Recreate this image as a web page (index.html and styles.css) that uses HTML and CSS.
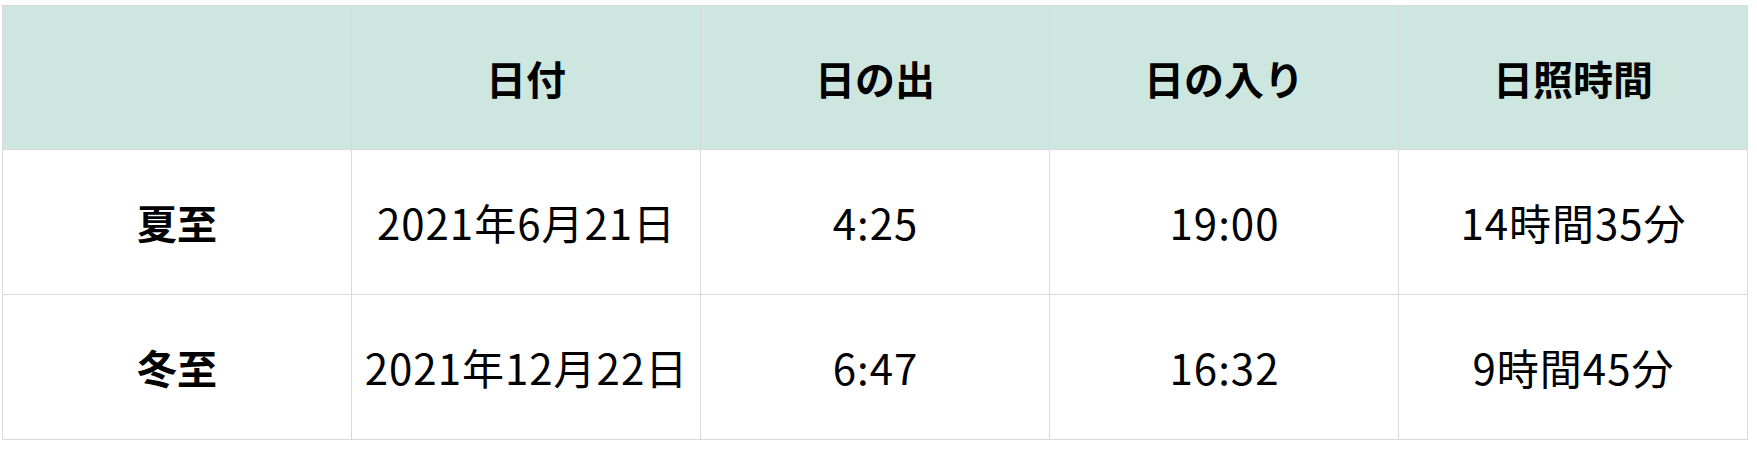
FILE: index.html
```html
<!DOCTYPE html>
<html lang="ja">
<head>
<meta charset="utf-8">
<link rel="stylesheet" href="styles.css">
</head>
<body>
<table class="sun-table">
  <thead>
    <tr>
      <th class="corner"></th>
      <th>日付</th>
      <th>日の出</th>
      <th>日の入り</th>
      <th>日照時間</th>
    </tr>
  </thead>
  <tbody>
    <tr>
      <th class="row-head">夏至</th>
      <td>2021年6月21日</td>
      <td>4:25</td>
      <td>19:00</td>
      <td>14時間35分</td>
    </tr>
    <tr>
      <th class="row-head">冬至</th>
      <td>2021年12月22日</td>
      <td>6:47</td>
      <td>16:32</td>
      <td>9時間45分</td>
    </tr>
  </tbody>
</table>
</body>
</html>
```

FILE: styles.css
```css
html, body {
  margin: 0;
  padding: 0;
  background: #ffffff;
}

body {
  padding: 5px 0 0 2px;
  font-family: "Noto Sans CJK JP", "Noto Sans", sans-serif;
  color: #000000;
}

.sun-table {
  border-collapse: collapse;
  table-layout: fixed;
  width: 1746px;
}

.sun-table th,
.sun-table td {
  border: 1px solid #d9d9d9;
  text-align: center;
  vertical-align: middle;
  padding: 0;
  font-size: 40px;
  line-height: 1;
}

.sun-table thead th {
  background: #cde6df;
  height: 143px;
  font-weight: 700;
}

.sun-table tbody th,
.sun-table tbody td {
  height: 144px;
}

.sun-table tbody td {
  font-weight: 400;
  font-size: 42px;
  letter-spacing: 1px;
  text-indent: 1px;
}

.row-head {
  font-weight: 700;
}
```
